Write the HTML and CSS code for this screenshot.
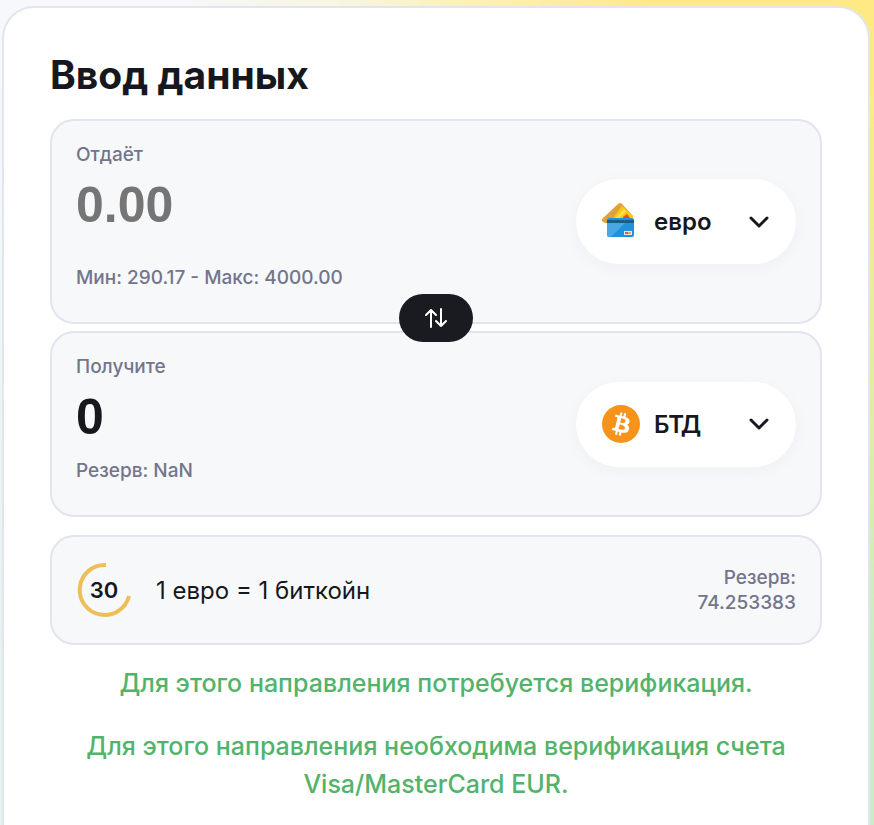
FILE: index.html
```html
<!DOCTYPE html>
<html lang="ru">
<head>
  <meta charset="UTF-8">
  <meta name="viewport" content="width=device-width, initial-scale=1">
  <title>Ввод данных</title>
  <link rel="stylesheet" href="styles.css">
</head>
<body>
  <main class="card">
    <h1>Ввод данных</h1>

    <form class="exchange">
      <section class="panel panel-give">
        <div class="amount">
          <label for="give">Отдаёт</label>
          <input type="text" id="give" placeholder="0.00" inputmode="decimal">
          <p class="limits">Мин: 290.17 - Макс: 4000.00</p>
        </div>
        <div class="currency">
          <svg class="icon" viewBox="0 0 38 38" aria-hidden="true">
            <path d="M0 18 Q-1 17 1 15 L16 1 Q18 -1 20 1 L31 13 V20 H5 L3 20 Z" fill="#e0a23c"/>
            <path d="M9 18 L20 3 L31 13 V18 Z" fill="#fcc90f"/>
            <path d="M12 17 L22 6 L24 8 L15 17 Z" fill="#ffe05a"/>
            <path d="M21 14 l4 -3 3 4 h-7z" fill="#ee4a24"/>
            <rect x="5" y="15" width="27" height="19" rx="2" fill="#1e93dc"/>
            <path d="M5 22 V32 Q5 34 7 34 H9 L26 17 H5 Z" fill="#62b6ea" opacity=".6"/>
            <rect x="5" y="17" width="27" height="3" fill="#1a5d8c"/>
            <rect x="22" y="28" width="8" height="4" fill="#e9e4ef"/>
            <path d="M23 30 h3" stroke="#c9606a" stroke-width="2"/>
            <path d="M26 30 h3" stroke="#d8b060" stroke-width="2"/>
          </svg>
          <select aria-label="Валюта отдачи">
            <option>евро</option>
          </select>
          <svg class="chevron" viewBox="0 0 22 14" aria-hidden="true">
            <path d="M3 3 L11 11 L19 3"/>
          </svg>
        </div>
        <button type="button" class="swap" aria-label="Поменять местами">
          <svg viewBox="0 0 24 22" aria-hidden="true">
            <path d="M7 20 V3 M2 8 L7 3 L12 8 M17 2 V19 M12 14 L17 19 L22 14"/>
          </svg>
        </button>
      </section>

      <section class="panel">
        <div class="amount">
          <label for="get">Получите</label>
          <input type="text" id="get" value="0" inputmode="decimal">
          <p>Резерв: NaN</p>
        </div>
        <div class="currency">
          <svg class="icon" viewBox="0 0 32 32" aria-hidden="true">
            <circle cx="16" cy="16" r="16" fill="#f7931a"/>
            <path fill="#fff" d="M23.189 14.02c.314-2.096-1.283-3.223-3.465-3.975l.708-2.84-1.728-.43-.69 2.765c-.454-.114-.92-.22-1.385-.326l.695-2.783L15.596 6l-.708 2.839c-.376-.086-.746-.17-1.104-.26l.002-.009-2.384-.595-.46 1.846s1.283.294 1.256.312c.7.175.826.638.805 1.006l-.806 3.235c.048.012.11.03.18.057l-.183-.045-1.13 4.532c-.086.212-.303.531-.793.41.018.025-1.256-.313-1.256-.313l-.858 1.978 2.25.561c.418.105.828.215 1.231.318l-.715 2.872 1.727.43.708-2.84c.472.127.93.245 1.378.357l-.706 2.828 1.728.43.715-2.866c2.948.558 5.164.333 6.097-2.333.752-2.146-.037-3.385-1.588-4.192 1.13-.26 1.98-1.003 2.207-2.538zm-3.95 5.538c-.533 2.147-4.148.986-5.32.695l.95-3.805c1.172.293 4.929.872 4.37 3.11zm.535-5.569c-.487 1.953-3.495.96-4.47.717l.86-3.45c.975.243 4.118.696 3.61 2.733z"/>
          </svg>
          <select aria-label="Валюта получения">
            <option>БТД</option>
          </select>
          <svg class="chevron" viewBox="0 0 22 14" aria-hidden="true">
            <path d="M3 3 L11 11 L19 3"/>
          </svg>
        </div>
      </section>
    </form>

    <section class="panel rate">
      <div class="timer">
        <svg viewBox="0 0 56 56" aria-hidden="true">
          <path d="M30 3 A25 25 0 1 0 53 34"/>
        </svg>
        <span>30</span>
      </div>
      <p class="course">1 евро = 1 биткойн</p>
      <p class="reserve">Резерв: 74.253383</p>
    </section>

    <div class="notes">
      <p>Для этого направления потребуется верификация.</p>
      <p>Для этого направления необходима верификация счета Visa/MasterCard EUR.</p>
    </div>
  </main>
</body>
</html>
```

FILE: styles.css
```css
* {
  box-sizing: border-box;
}

body {
  margin: 0;
  padding: 6px 4px 0 2px;
  min-height: 100vh;
  display: flex;
  font-family: Inter, "Liberation Sans", sans-serif;
  color: #16181d;
  background:
    linear-gradient(to bottom, #ffe985 10%, #c9edc6 80%) right / 8px 100% no-repeat,
    linear-gradient(to bottom, #f6f8fb 10%, #e6f2ee 80%) left / 8px 100% no-repeat,
    linear-gradient(to right, #f6f8fb 20%, #f8f5de 40%, #ffe985 75%);
}

h1, p {
  margin: 0;
}

.card {
  flex: 1;
  padding: 43px 46px 24px;
  background: #fff;
  border: 2px solid #e2e4ee;
  border-bottom: none;
  border-radius: 32px 32px 0 0;
}

h1 {
  margin-bottom: 20px;
  font-size: 39px;
  line-height: 48px;
  font-weight: 700;
}

.exchange {
  display: grid;
  gap: 7px;
}

.panel {
  display: flex;
  align-items: center;
  justify-content: space-between;
  padding: 20px 24px;
  background: #f7f8fa;
  border: 2px solid #e2e4ee;
  border-radius: 24px;
}

.panel-give {
  position: relative;
}

.amount {
  flex: 1;
  padding-bottom: 10px;
  font-size: 19px;
  line-height: 28px;
  font-weight: 500;
  color: #72758c;
}

.amount label {
  display: block;
}

.amount input {
  display: block;
  width: 100%;
  height: 56px;
  margin: 8px 0 12px;
  padding: 0;
  border: none;
  outline: none;
  background: none;
  font-family: "Liberation Sans", Arial, sans-serif;
  font-size: 50px;
  font-weight: 700;
  color: #16181d;
}

.amount input::placeholder {
  color: #757575;
}

.amount .limits {
  margin-top: 31px;
}

.currency {
  display: flex;
  align-items: center;
  width: 220px;
  height: 85px;
  padding: 0 26px;
  background: #fff;
  border-radius: 43px;
  box-shadow: 0 4px 16px rgba(30, 40, 80, 0.04);
}

.icon {
  width: 38px;
  height: 38px;
}

.currency select {
  flex: 1;
  min-width: 0;
  margin-left: 14px;
  padding: 0;
  appearance: none;
  border: none;
  background: none;
  font-family: inherit;
  font-size: 24px;
  font-weight: 600;
  color: #16181d;
}

.chevron {
  width: 22px;
  height: 14px;
  fill: none;
  stroke: #16181d;
  stroke-width: 3;
  stroke-linecap: round;
  stroke-linejoin: round;
}

/* sits on the seam between the two panels */
.swap {
  position: absolute;
  left: 50%;
  bottom: -20px;
  z-index: 1;
  display: flex;
  align-items: center;
  justify-content: center;
  width: 74px;
  height: 48px;
  padding: 0;
  transform: translateX(-50%);
  background: #1a1b20;
  border: none;
  border-radius: 24px;
  cursor: pointer;
}

.swap svg {
  width: 24px;
  height: 22px;
  fill: none;
  stroke: #fff;
  stroke-width: 2;
  stroke-linecap: round;
  stroke-linejoin: round;
}

.rate {
  min-height: 110px;
  margin-top: 18px;
}

.timer {
  display: grid;
  place-items: center;
  width: 56px;
  height: 56px;
}

.timer svg,
.timer span {
  grid-area: 1 / 1;
}

.timer svg {
  width: 56px;
  height: 56px;
  fill: none;
  stroke: #eebf58;
  stroke-width: 4;
}

.timer span {
  font-size: 22px;
  font-weight: 600;
}

.course {
  flex: 1;
  margin-left: 24px;
  font-size: 24px;
}

.reserve {
  width: 110px;
  font-size: 19px;
  line-height: 25px;
  font-weight: 500;
  text-align: right;
  color: #72758c;
}

.notes {
  display: grid;
  gap: 25px;
  margin-top: 19px;
  font-size: 25px;
  line-height: 38px;
  font-weight: 500;
  text-align: center;
  color: #52b36b;
}
```
